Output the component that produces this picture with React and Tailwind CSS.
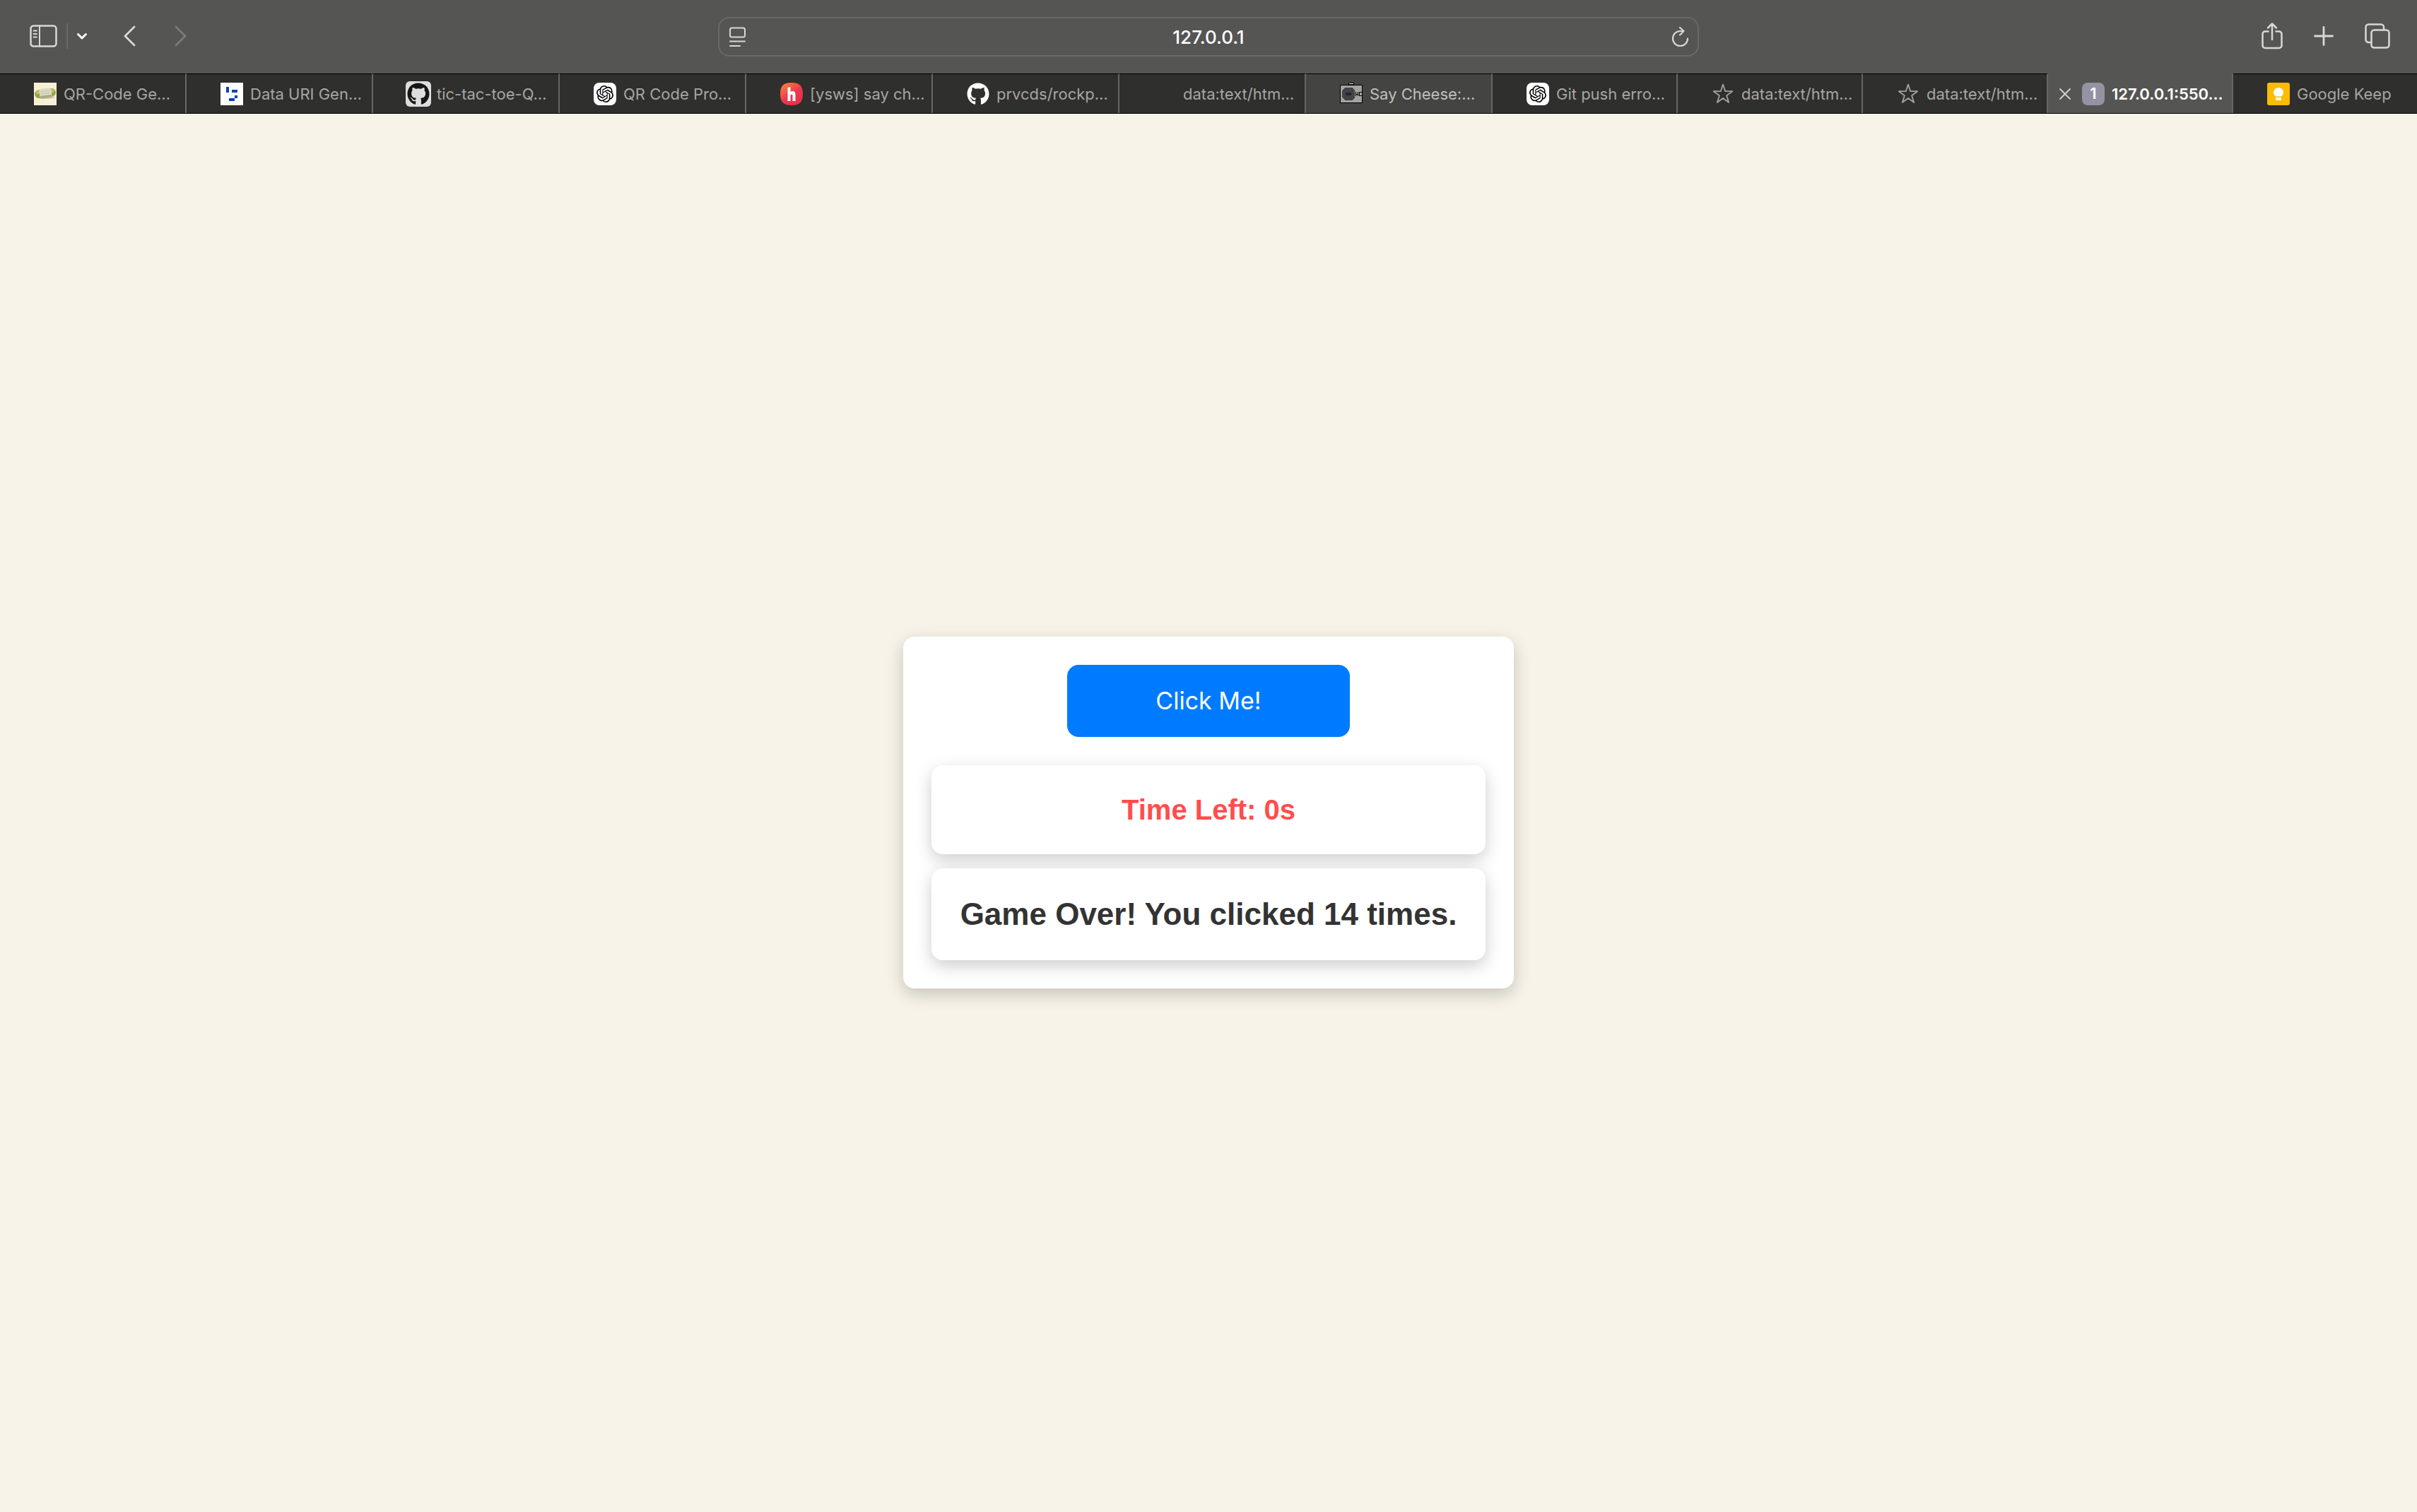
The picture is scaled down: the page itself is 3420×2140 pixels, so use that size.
import { FaGithub } from "react-icons/fa";
import { SiOpenai } from "react-icons/si";

function CapsuleIcon() {
  return (
    <svg viewBox="0 0 32 32" className="size-8">
      <rect width="32" height="32" fill="#f8f0d6" />
      <ellipse cx="17" cy="21" rx="13" ry="2" fill="#d9d0ac" />
      <g transform="rotate(-7 16 15)">
        <rect x="1" y="9" width="30" height="12" rx="6" fill="#9da23f" />
        <rect x="3" y="10" width="26" height="5" rx="2.5" fill="#bdc074" />
        <rect x="8" y="8" width="17" height="14" rx="2" fill="#dcdcc6" />
        <rect x="8" y="18" width="17" height="4" rx="2" fill="#a9ac83" />
        <path d="M10 12h13M10 15h13" stroke="#b4b7a0" strokeWidth="1" strokeDasharray="2 1" />
      </g>
    </svg>
  );
}

function PixelIcon() {
  return (
    <svg viewBox="0 0 32 32" className="size-8">
      <rect width="32" height="32" fill="#fff" />
      <path d="M8 6h4v8h-4zM16 10h8v4h-8zM20 18h4v4h-4zM12 22h8v4h-8z" fill="#0645ad" />
    </svg>
  );
}

function GithubTile() {
  return (
    <span className="-mx-0.5 flex size-9 shrink-0 items-center justify-center rounded-md bg-[#dedede]">
      <FaGithub className="size-8 text-[#161616]" />
    </span>
  );
}

function OpenAiTile() {
  return (
    <span className="flex size-8 items-center justify-center rounded-lg bg-white">
      <SiOpenai className="size-6 text-black" />
    </span>
  );
}

function HackIcon() {
  return (
    <svg viewBox="0 0 32 32" className="size-8">
      <defs>
        <linearGradient id="hack" x1="0" y1="0" x2="0.7" y2="1">
          <stop offset="0" stopColor="#ff8c37" />
          <stop offset="0.6" stopColor="#ec3750" />
          <stop offset="1" stopColor="#e8304c" />
        </linearGradient>
      </defs>
      <path d="M16 0C27 0 32 4 32 16S27 32 16 32 0 28 0 16 5 0 16 0z" fill="url(#hack)" />
      <path d="M10.5 7l4-1v7c4-2 7-.6 7 3.500v9.500h-4v-8c0-2-3-1.500-3 .5v7.500h-4z" fill="#fff" />
    </svg>
  );
}

function CameraIcon() {
  return (
    <svg viewBox="0 0 32 32" className="size-8" shapeRendering="crispEdges">
      <rect x="12" y="0" width="8" height="4" fill="#000" />
      <rect x="13" y="1" width="6" height="1" fill="#fff" />
      <rect x="0" y="3" width="32" height="26" fill="#000" />
      <rect x="1" y="4" width="30" height="24" fill="#a3a3a3" />
      <path d="M7 7h10l4 4v10l-4 4h-10l-4-4v-10z" fill="#434343" />
      <rect x="8" y="14" width="8" height="4" fill="#27233a" />
      <path d="M22.500 13v6M25.500 13v6M22 16h4M31 13.500h-3.500v5h3.500" stroke="#000" fill="none" />
    </svg>
  );
}

function StarIcon() {
  return (
    <svg viewBox="0 0 32 32" className="size-8" fill="none" stroke="#a3a3a1" strokeWidth="1.800" strokeLinejoin="round">
      <path d="M16 2.500l3.200 9.700h10l-8.100 6 3.100 9.700-8.200-6-8.200 6 3.100-9.700-8.100-6h10z" />
    </svg>
  );
}

function BadgeIcon() {
  return (
    <span className="flex size-8 items-center justify-center rounded-lg bg-[#9393a3] text-[22px] font-semibold text-white">
      1
    </span>
  );
}

function KeepIcon() {
  return (
    <svg viewBox="0 0 32 32" className="size-8">
      <rect width="32" height="32" rx="3" fill="#fbbc04" />
      <path d="M16 7a7 7 0 0 0-7 7c0 2.500 1.300 4.300 3 5.500h8c1.700-1.200 3-3 3-5.500a7 7 0 0 0-7-7z" fill="#fff" />
      <rect x="12" y="21" width="8" height="4" fill="#fff" />
    </svg>
  );
}

const tabs = [
  { title: "QR-Code Ge…", icon: <CapsuleIcon /> },
  { title: "Data URI Gen…", icon: <PixelIcon /> },
  { title: "tic-tac-toe-Q…", icon: <GithubTile /> },
  { title: "QR Code Pro…", icon: <OpenAiTile /> },
  { title: "[ysws] say ch…", icon: <HackIcon /> },
  { title: "prvcds/rockp…", icon: <FaGithub className="size-8 text-white" /> },
  { title: "data:text/htm…", icon: null },
  { title: "Say Cheese:…", icon: <CameraIcon />, hovered: true },
  { title: "Git push erro…", icon: <OpenAiTile /> },
  { title: "data:text/htm…", icon: <StarIcon /> },
  { title: "data:text/htm…", icon: <StarIcon /> },
  { title: "127.0.0.1:550…", icon: <BadgeIcon />, active: true },
  { title: "Google Keep", icon: <KeepIcon /> },
];

function Tab({ title, icon, hovered, active }) {
  const tone = active
    ? "bg-[#555553] text-white font-semibold border-t-[#555553]"
    : hovered
      ? "bg-[#444442] text-[#c0c0be] border-t-black"
      : "bg-[#2f2f2d] text-[#a6a6a4] border-t-black";
  return (
    <div className={"flex h-14 min-w-0 items-center border-t border-r-2 border-r-[#666664] last:border-r-0 " + tone}>
      <div className="flex w-12 shrink-0 justify-center">
        {active && (
          <button aria-label="Close tab" className="flex size-6 items-center justify-center">
            <svg viewBox="0 0 16 16" className="size-4" stroke="#d0d0ce" strokeWidth="1.800" strokeLinecap="round">
              <path d="M1 1l14 14M15 1L1 15" />
            </svg>
          </button>
        )}
      </div>
      <button className="flex min-w-0 items-center gap-2.5 text-left">
        <span className="flex size-8 shrink-0 items-center justify-center">{icon}</span>
        <span className="whitespace-nowrap text-[22px] leading-8">{title}</span>
      </button>
    </div>
  );
}

function Toolbar() {
  return (
    <div className="grid h-26 grid-cols-[1fr_1388px_1fr] items-center bg-[#555553] text-[#d8d8d6]">
      <div className="flex items-center pb-0.5 pl-[42px]">
        <button aria-label="Show sidebar">
          <svg viewBox="0 0 40 32" className="h-8 w-10" fill="none" stroke="currentColor" strokeWidth="2.500">
            <rect x="1.500" y="1.500" width="36" height="29" rx="4" />
            <path d="M14 2v28" strokeWidth="2" />
            <path d="M5.500 8.500h4.500M5.500 13h4.500M5.500 17.500h4.500" strokeWidth="1.800" strokeLinecap="round" />
          </svg>
        </button>
        <div className="ml-3 h-9 w-0.5 bg-[#6a6a68]" />
        <button aria-label="Tab groups" className="ml-3 text-white">
          <svg viewBox="0 0 16 12" className="h-3 w-4" fill="none" stroke="currentColor" strokeWidth="3" strokeLinecap="round" strokeLinejoin="round">
            <path d="M2.500 3.500l5.500 5.500 5.500-5.500" />
          </svg>
        </button>
        <button aria-label="Back" className="ml-[50px]">
          <svg viewBox="0 0 20 32" className="h-8 w-5" fill="none" stroke="currentColor" strokeWidth="2.800" strokeLinecap="round" strokeLinejoin="round">
            <path d="M16 3L3 16l13 13" />
          </svg>
        </button>
        <button aria-label="Forward" className="ml-[52px] text-[#7b7b79]" disabled>
          <svg viewBox="0 0 20 32" className="h-8 w-5" fill="none" stroke="currentColor" strokeWidth="2.800" strokeLinecap="round" strokeLinejoin="round">
            <path d="M3 3l13 13L3 29" />
          </svg>
        </button>
      </div>

      <div className="flex h-14 items-center justify-between rounded-2xl border-2 border-[#696967] px-3">
        <button aria-label="Page menu">
          <svg viewBox="0 0 26 28" className="h-7 w-[26px]" fill="none" stroke="currentColor" strokeWidth="2" strokeLinecap="round">
            <rect x="3" y="1.500" width="21" height="13" rx="2.500" />
            <path d="M3 20.500h21M3 27h14" />
          </svg>
        </button>
        <input
          aria-label="Address"
          defaultValue="127.0.0.1"
          className="min-w-0 flex-1 bg-transparent text-center text-[26px] font-medium text-white outline-none"
        />
        <button aria-label="Reload">
          <svg viewBox="0 0 26 30" className="h-[30px] w-[26px]" fill="none" stroke="currentColor" strokeWidth="2.200" strokeLinecap="round" strokeLinejoin="round">
            <path d="M24 17.500a10.500 10.500 0 1 1-10.500-10.500h4M13 2l5.500 5-5.500 5.500" />
          </svg>
        </button>
      </div>

      <div className="flex items-center justify-end gap-11 pr-[38px] pb-0.5">
        <button aria-label="Share">
          <svg viewBox="0 0 30 40" className="h-10 w-[30px]" fill="none" stroke="currentColor" strokeWidth="2.500" strokeLinecap="round" strokeLinejoin="round">
            <path d="M9.500 13.500h-4.500a3.500 3.500 0 0 0-3.500 3.500v16.500a3.500 3.500 0 0 0 3.500 3.500h20a3.500 3.500 0 0 0 3.500-3.500v-16.500a3.500 3.500 0 0 0-3.500-3.500h-4.500M15 25v-21M9 8.500l6-6 6 6" />
          </svg>
        </button>
        <button aria-label="New tab">
          <svg viewBox="0 0 28 28" className="size-7" stroke="currentColor" strokeWidth="2.800" strokeLinecap="round">
            <path d="M14 1.500v25M1.500 14h25" />
          </svg>
        </button>
        <button aria-label="Tab overview">
          <svg viewBox="0 0 36 36" className="size-9" fill="none" stroke="currentColor" strokeWidth="2.500">
            <rect x="9.500" y="9.500" width="25" height="25" rx="4" />
            <path d="M9 27h-3.500a4 4 0 0 1-4-4v-17.500a4 4 0 0 1 4-4h17.500a4 4 0 0 1 4 4v3.500" />
          </svg>
        </button>
      </div>
    </div>
  );
}

export default function App() {
  return (
    <div className="flex min-h-screen flex-col bg-[#f7f3e8] font-['Inter',sans-serif]">
      <header>
        <Toolbar />
        <nav
          aria-label="Tabs"
          className="grid grid-cols-[repeat(8,minmax(0,264fr))_repeat(4,minmax(0,262fr))_minmax(0,260fr)] border-b border-black"
        >
          {tabs.map((tab, i) => (
            <Tab key={i} {...tab} />
          ))}
        </nav>
      </header>

      <main className="flex flex-1 items-center justify-center pb-0.5">
        <section className="flex min-w-[864px] flex-col items-center rounded-2xl bg-white p-10 shadow-[0_8px_24px_rgba(0,0,0,0.2)]">
          <button className="mb-10 w-[400px] rounded-2xl bg-[#007bff] py-[30px] text-[34px] leading-[42px] text-white">
            Click Me!
          </button>
          <div className="mb-5 w-full rounded-2xl bg-white p-10 text-center font-['Liberation_Sans',sans-serif] text-[40px] leading-[46px] font-bold text-[#ff4d4d] shadow-[0_8px_24px_rgba(0,0,0,0.2)]">
            Time Left: 0s
          </div>
          <div className="w-full rounded-2xl bg-white p-10 text-center font-['Liberation_Sans',sans-serif] text-[44px] leading-[50px] font-bold text-[#333333] shadow-[0_8px_24px_rgba(0,0,0,0.2)]">
            Game Over! You clicked 14 times.
          </div>
        </section>
      </main>
    </div>
  );
}
